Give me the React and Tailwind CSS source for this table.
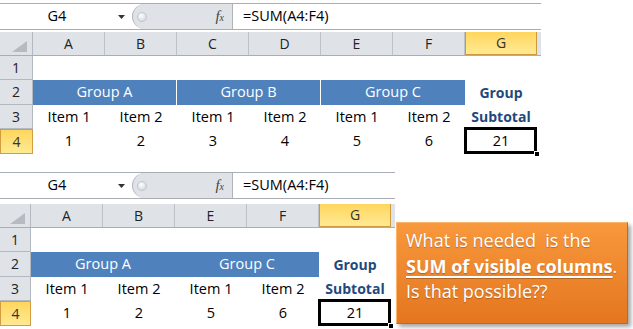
import React from "react";

function Triangle() {
  return (
    <svg width="7" height="4" viewBox="0 0 7 4">
      <path d="M0 0H7L3.5 4Z" fill="#333" />
    </svg>
  );
}

function Corner() {
  return (
    <svg width="15" height="11" viewBox="0 0 15 11" className="absolute bottom-[3px] right-[5px]">
      <path d="M15 0V11H0Z" fill="#b6bbc2" />
    </svg>
  );
}

function FormulaBar() {
  return (
    <div className="flex h-[27px] border-y border-[#a9aeb5] bg-white">
      <div className="flex w-[132px] shrink-0 items-center">
        <span className="w-[114px] text-center text-[14.5px] text-black">G4</span>
        <span className="ml-[4px] flex items-center">
          <Triangle />
        </span>
      </div>
      <div className="flex w-[100px] shrink-0 items-center rounded-l-[13px] border-l border-[#aeb3ba] bg-[#dfe3e8]">
        <span className="ml-[4px] h-[10px] w-[10px] rounded-full border border-[#c2c6cc] bg-[radial-gradient(circle_at_40%_35%,#ffffff,#c9cdd3)]" />
        <span className="ml-auto mr-[8px] font-['Liberation_Serif',serif] text-[15px] italic leading-none text-[#444]">
          f<span className="text-[10px]">x</span>
        </span>
      </div>
      <div className="flex flex-1 items-center border-l border-[#aeb3ba] pl-[10px] text-[14.5px] text-black">
        =SUM(A4:F4)
      </div>
    </div>
  );
}

const cellBase = "flex w-[72px] shrink-0 items-center justify-center";

function Sheet({ width, rh, spacer, cols, groups, sep, items, values }) {
  const rowHdr = `${rh} shrink-0 flex items-center justify-center border-r border-b border-[#b3b9c1] bg-[#dfe3e8] text-[14px] text-[#222]`;
  return (
    <div className={`${width} shrink-0`}>
      <FormulaBar />
      <div className={spacer} />
      <div className="flex h-[24px] border-b border-[#a9aeb5] bg-[#dfe3e8]">
        <div className={`${rh} relative shrink-0 border-r border-[#b3b9c1]`}>
          <Corner />
        </div>
        {cols.map((c) =>
          c === "G" ? (
            <div
              key={c}
              className={`${cellBase} border-x border-b border-[#cf9a3e] bg-gradient-to-b from-[#ffd65c] to-[#ffea92] text-[14px] text-[#333]`}
            >
              {c}
            </div>
          ) : (
            <div key={c} className={`${cellBase} border-r border-[#bcc2ca] text-[14px] text-[#222]`}>
              {c}
            </div>
          )
        )}
        <div className="flex-1" />
      </div>
      <div className="flex h-[24px]">
        <div className={rowHdr}>1</div>
        <div className="flex-1 bg-white" />
      </div>
      <div className="flex h-[25px]">
        <div className={rowHdr}>2</div>
        <div className="flex">
          {groups.map((g, i) => (
            <div
              key={g}
              className={`flex w-[144px] shrink-0 items-center justify-center bg-[#4f81bd] text-[14.5px] text-white ${
                sep && i < groups.length - 1 ? "border-r border-white" : ""
              }`}
            >
              {g}
            </div>
          ))}
        </div>
        <div className={`${cellBase} text-[14px] font-bold text-[#1f497d]`}>Group</div>
      </div>
      <div className="flex h-[24px]">
        <div className={rowHdr}>3</div>
        {items.map((t, i) => (
          <div key={i} className={`${cellBase} text-[14.5px] text-black`}>
            {t}
          </div>
        ))}
        <div className={`${cellBase} text-[14px] font-bold text-[#1f497d]`}>Subtotal</div>
      </div>
      <div className="flex h-[25px]">
        <div
          className={`${rh} flex shrink-0 items-center justify-center border border-[#d39c3f] bg-gradient-to-b from-[#ffd65c] to-[#ffea92] text-[14px] text-[#333]`}
        >
          4
        </div>
        {values.map((v, i) => (
          <div key={i} className={`${cellBase} text-[14.5px] text-black`}>
            {v}
          </div>
        ))}
        <div className={`${cellBase} relative text-[14.5px] text-black`}>
          21
          <div className="absolute -left-[1px] -top-[2px] bottom-0 right-0 border-[3px] border-black" />
          <div className="absolute -bottom-[3px] -right-[3px] h-[6px] w-[6px] border border-white bg-black" />
        </div>
      </div>
    </div>
  );
}

export default function App() {
  return (
    <div className="h-[329px] w-[633px] overflow-hidden bg-white pt-[3px] font-['Open_Sans',sans-serif] leading-none">
      <Sheet
        width="w-[541px]"
        rh="w-[33px]"
        spacer="h-[2px]"
        cols={["A", "B", "C", "D", "E", "F", "G"]}
        groups={["Group A", "Group B", "Group C"]}
        sep
        items={["Item 1", "Item 2", "Item 1", "Item 2", "Item 1", "Item 2"]}
        values={[1, 2, 3, 4, 5, 6]}
      />
      <div className="mt-[18px] flex items-start">
        <Sheet
          width="w-[395px]"
          rh="w-[31px]"
          spacer="h-[5px]"
          cols={["A", "B", "E", "F", "G"]}
          groups={["Group A", "Group C"]}
          sep={false}
          items={["Item 1", "Item 2", "Item 1", "Item 2"]}
          values={[1, 2, 5, 6]}
        />
        <div className="ml-px mt-[50px] h-[102px] w-[232px] shrink-0 border border-t-[#fbb56e] border-l-[#fbb56e] border-r-[#c9661a] border-b-[#c9661a] bg-gradient-to-b from-[#f8983c] to-[#e4761f] pl-[9px] pt-[5px] text-[18px] leading-[25.5px] text-white shadow-[3px_3px_4px_rgba(0,0,0,0.35)] [text-shadow:0_1px_1px_rgba(0,0,0,0.25)]">
          <div>What is needed&nbsp; is the</div>
          <div>
            <span className="font-bold underline decoration-2 underline-offset-[3px]">SUM of visible columns</span>.
          </div>
          <div>Is that possible??</div>
        </div>
      </div>
    </div>
  );
}
